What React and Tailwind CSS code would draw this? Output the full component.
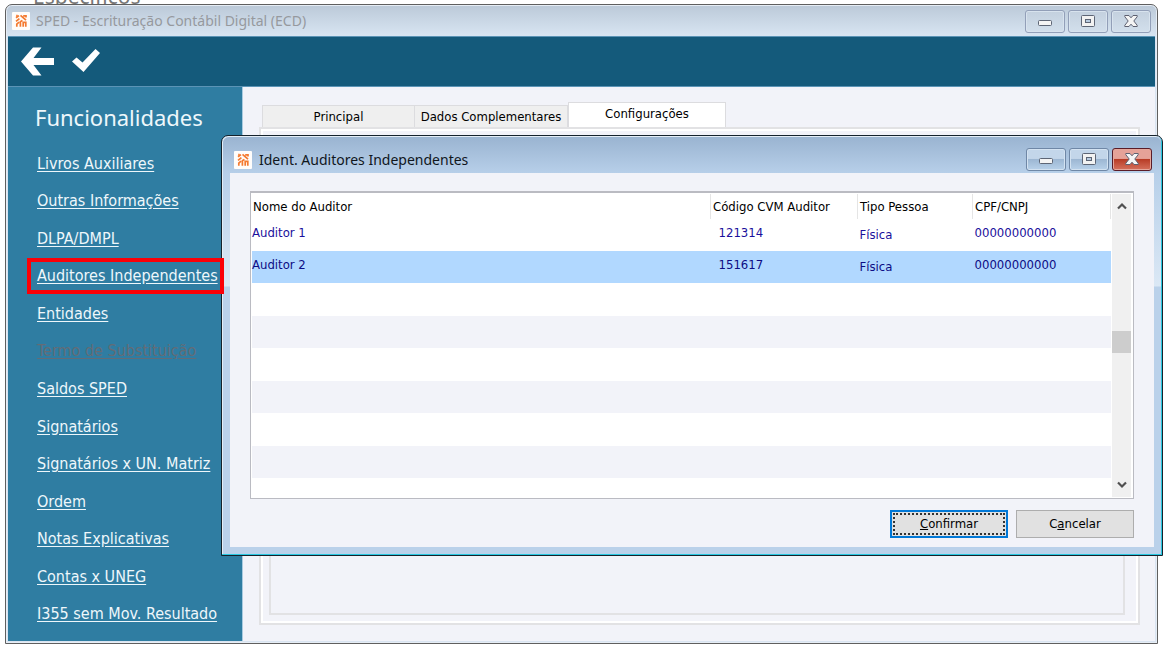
import React from "react";

const LINKS = [
  "Livros Auxiliares",
  "Outras Informações",
  "DLPA/DMPL",
  "Auditores Independentes",
  "Entidades",
  "Termo de Substituição",
  "Saldos SPED",
  "Signatários",
  "Signatários x UN. Matriz",
  "Ordem",
  "Notas Explicativas",
  "Contas x UNEG",
  "I355 sem Mov. Resultado",
];

const ROWS = [
  { nome: "Auditor 1", cvm: "121314", tipo: "Física", doc: "00000000000" },
  { nome: "Auditor 2", cvm: "151617", tipo: "Física", doc: "00000000000" },
];

const FILLERS = [
  "h-[33px] bg-white",
  "h-8 bg-[#f2f3f9]",
  "h-[33px] bg-white",
  "h-8 bg-[#f2f3f9]",
  "h-[33px] bg-white",
  "h-8 bg-[#f2f3f9]",
  "h-[19px] bg-white",
];

function AppLogo() {
  return (
    <svg className="h-[18px] w-[18px] shrink-0" viewBox="0 0 18 18" aria-hidden="true">
      <rect width="18" height="18" rx="1" fill="#fffdfb" />
      <g stroke="#f47a30" strokeWidth="1.7" fill="none">
        <path d="M4 5.800 7 3.600M8.500 3.400l5.500 4.800M4 9.400l3.400-2.800M11.200 3.800h2.800v1.800M4.200 3.600h1.400" />
        <path d="M4.800 14.800v-2.600l2.200-2M8.400 14.800V9.800l2-1.400M11.200 14.800v-4.400h2.600v4.400" />
      </g>
    </svg>
  );
}

function MinimizeIcon() {
  return (
    <svg className="h-4 w-4" viewBox="0 0 16 16" aria-hidden="true">
      <rect x="1.500" y="7.500" width="13" height="5" rx="1" fill="#f4f4f4" stroke="#5d6575" />
    </svg>
  );
}

function MaximizeIcon() {
  return (
    <svg className="h-4 w-4" viewBox="0 0 16 16" aria-hidden="true">
      <rect x="1.500" y="2.500" width="13" height="11" rx="1" fill="#f2f2f2" stroke="#5d6575" />
      <rect x="5.500" y="6.500" width="5" height="3" fill="#b7cbe0" stroke="#5d6575" />
    </svg>
  );
}

function CloseIcon() {
  return (
    <svg className="h-4 w-4" viewBox="0 0 16 16" aria-hidden="true">
      <path
        d="M1.800 2.500h4.200l2 2.300 2-2.300h4.200v1.200L10.800 8l3.400 4.300v1.200H10l-2-2.300-2 2.300H1.800v-1.200L5.200 8 1.800 3.700z"
        fill="#f4f4f4"
        stroke="#5d6070"
      />
    </svg>
  );
}

function WindowButtons({ active }) {
  const base = "flex h-[23px] w-10 items-center justify-center rounded-[3px] border ";
  const plain = active
    ? "border-[#6f87a6] bg-linear-to-b from-[#c3d6ea] from-45% via-[#9db7d3] via-50% to-[#b8d1ea] shadow-[inset_0_0_0_1px_#d3e2f1]"
    : "border-[#929fb8] bg-linear-to-b from-[#c3d0de] to-[#d2dfec] shadow-[inset_0_0_0_1px_#d8e3ee]";
  const close = active
    ? "border-[#5a1c28] bg-linear-to-b from-[#e5a298] from-45% via-[#b83c26] via-50% to-[#d5705c] shadow-[inset_0_0_0_1px_#e5a79c]"
    : plain;
  return (
    <div className="flex gap-[3px]">
      <button type="button" aria-label="Minimizar" className={base + plain}><MinimizeIcon /></button>
      <button type="button" aria-label="Maximizar" className={base + plain}><MaximizeIcon /></button>
      <button type="button" aria-label="Fechar" className={base + close}><CloseIcon /></button>
    </div>
  );
}

function Toolbar() {
  return (
    <div className="flex h-[51px] items-center gap-4 border-y border-[#5b94b6] bg-[#145a7b] pl-3">
      <button type="button" aria-label="Voltar">
        <svg className="h-[29px] w-[35px]" viewBox="0 0 35 29" aria-hidden="true">
          <path d="M13 .5h8.500L13.500 11H34v7H13.500l8 10.500H13L1 14.500z" fill="#fff" />
        </svg>
      </button>
      <button type="button" aria-label="Confirmar seleção" className="pb-1">
        <svg className="h-[26px] w-[30px]" viewBox="0 0 30 26" aria-hidden="true">
          <path d="M1 14.500 5.500 10.500l6 5L24.500 2l4.500 4-16.500 19z" fill="#fff" />
        </svg>
      </button>
    </div>
  );
}

function Sidebar() {
  return (
    <nav className="w-[235px] shrink-0 border-r border-[#a9cbe0] bg-[#2f7da2] pb-2 text-[#eef7fb]">
      <h1 className="pt-3 pl-[27px] font-['Noto_Sans',sans-serif] text-[22px] leading-9">Funcionalidades</h1>
      <ul className="grid h-[498px] auto-rows-fr pt-2.5">
        {LINKS.map((label) => (
          <li key={label} className="flex items-center pl-[23px]">
            <a
              href="#"
              className={
                "pr-0.5 pl-1.5 text-base leading-7 whitespace-nowrap underline underline-offset-2 " +
                (label === "Termo de Substituição" ? "text-[#636c76] " : "") +
                (label === "Auditores Independentes" ? "relative z-20 outline-4 outline-[#fb0007] " : "")
              }
            >
              {label}
            </a>
          </li>
        ))}
      </ul>
    </nav>
  );
}

function Tabs() {
  const idle = "mt-[3px] h-[22px] border border-b-0 border-[#dcdcdf] bg-[#efefef] ";
  return (
    <div role="tablist" className="flex pl-[3px] text-[13px] leading-5">
      <button type="button" role="tab" aria-selected="false" className={idle + "w-[153px]"}>Principal</button>
      <button type="button" role="tab" aria-selected="false" className={idle + "w-[153px] border-l-0"}>Dados Complementares</button>
      <button type="button" role="tab" aria-selected="true" className="-mb-[2px] h-[27px] w-[158px] border border-b-0 border-[#dcdcdf] bg-white pb-1">
        Configurações
      </button>
    </div>
  );
}

function AuditorTable() {
  const head = "border-r border-[#e5e5e5] text-left font-normal ";
  return (
    <div className="flex border border-[#babbc2] border-t-2 bg-white p-px">
      <div className="min-w-0 flex-1 pr-px">
        <table className="w-full table-fixed border-collapse text-[13px]">
          <colgroup>
            <col />
            <col className="w-[147px]" />
            <col className="w-[115px]" />
            <col className="w-[138px]" />
          </colgroup>
          <thead>
            <tr className="h-[25px] leading-4 text-black">
              <th className={head + "pl-px"}>Nome do Auditor</th>
              <th className={head + "pl-0.5"}>Código CVM Auditor</th>
              <th className={head + "pl-0.5"}>Tipo Pessoa</th>
              <th className={head + "pl-0.5"}>CPF/CNPJ</th>
            </tr>
          </thead>
          <tbody className="text-[#1a109c]">
            {ROWS.map((row, i) => (
              <tr key={row.cvm} className={"h-8 align-top leading-5 " + (i === 1 ? "bg-[#b1d8ff] text-[#0c0c84]" : "bg-white")}>
                <td className="pt-1">{row.nome}</td>
                <td className="pt-1 pl-2">{row.cvm}</td>
                <td className="pt-1.5 pl-0.5">{row.tipo}</td>
                <td className="pt-1 pl-0.5">{row.doc}</td>
              </tr>
            ))}
          </tbody>
        </table>
        {FILLERS.map((cls, i) => (
          <div key={i} className={cls} />
        ))}
      </div>
      <div className="mr-px flex w-[19px] flex-col items-center bg-[#f0f0f0]">
        <button type="button" aria-label="Rolar para cima" className="flex h-6 w-full items-center justify-center">
          <svg className="h-2 w-3" viewBox="0 0 12 8" aria-hidden="true">
            <path d="M2 6.500 6 2.500l4 4" fill="none" stroke="#505050" strokeWidth="2.200" />
          </svg>
        </button>
        <div className="mt-[113px] h-[22px] w-full bg-[#cdcdcd]" />
        <button type="button" aria-label="Rolar para baixo" className="mt-auto flex h-6 w-full items-center justify-center">
          <svg className="h-2 w-3" viewBox="0 0 12 8" aria-hidden="true">
            <path d="M2 1.500 6 5.500l4-4" fill="none" stroke="#505050" strokeWidth="2.200" />
          </svg>
        </button>
      </div>
    </div>
  );
}

function AuditorDialog() {
  return (
    <section
      role="dialog"
      aria-label="Ident. Auditores Independentes"
      className="absolute top-[135px] right-[3px] left-[221px] z-10 rounded-t-[7px] border border-[#15222c] bg-[linear-gradient(#b7cfe9_0,#b7cfe9_37px,#dbe8f5_150px,#bad1ea_151px)] shadow-[inset_-1px_-1px_0_#27c7e0,inset_1px_1px_0_#e4eef7]"
    >
      <header className="mx-px mt-px flex h-9 items-center justify-between rounded-t-md bg-linear-to-b from-[#9ab4d1] to-[#b7cfe9] pr-[9px] pl-[11px]">
        <div className="flex items-center gap-[7px] pt-2.5">
          <AppLogo />
          <h2 className="font-['Noto_Sans',sans-serif] text-sm leading-5 text-[#10161c]">Ident. Auditores Independentes</h2>
        </div>
        <div className="pt-2"><WindowButtons active /></div>
      </header>
      <div className="mx-2 mb-2 bg-[#f2f3f9] px-[20px] pt-[18px] pb-[9px]">
        <AuditorTable />
        <div className="flex justify-end gap-2 pt-[11px] text-[13px]">
          <button type="button" className="h-7 w-[118px] border-2 border-[#0078d7] bg-[#e1e1e1] p-px">
            <span className="flex h-full items-center justify-center border-2 border-dotted border-[#333]">
              <span><u>C</u>onfirmar</span>
            </span>
          </button>
          <button type="button" className="h-7 w-[118px] border border-[#adadad] bg-[#e1e1e1]">
            C<u>a</u>ncelar
          </button>
        </div>
      </div>
    </section>
  );
}

export default function App() {
  return (
    <main className="relative overflow-hidden bg-white pb-1 font-['DejaVu_Sans_Condensed','Noto_Sans',sans-serif] text-black">
      <div className="flex h-1 items-end pl-[33px]">
        <p className="font-['Noto_Sans',sans-serif] text-[21px] leading-4 text-[#777]">Específicos</p>
      </div>
      <section className="relative mr-2 ml-[5px] rounded-t-[7px] border border-[#5f5f5f] bg-[#d9e4f1] shadow-[inset_0_0_0_1px_#e6edf5]">
        <header className="mx-px mt-px flex h-[30px] items-center justify-between rounded-t-[5px] bg-linear-to-b from-[#bccad9] to-[#d8e5f2] pr-[5px] pl-[5px]">
          <div className="flex items-center gap-1.5">
            <AppLogo />
            <h2 className="font-['Noto_Sans',sans-serif] text-sm leading-5 text-[#96999e]">SPED - Escrituração Contábil Digital (ECD)</h2>
          </div>
          <WindowButtons active={false} />
        </header>
        <div className="mx-[2px] mb-[2px] bg-[#f2f3f9]">
          <Toolbar />
          <div className="flex">
            <Sidebar />
            <div className="flex min-w-0 flex-1 flex-col pt-[15px] pr-[15px] pb-4 pl-4">
              <Tabs />
              <div className="flex-1 border-2 border-[#e2e2e4] py-2 pr-[13px] pl-2 shadow-[inset_0_0_0_2px_#fff]">
                <div className="h-full border-2 border-[#e2e2e4]" />
              </div>
            </div>
          </div>
        </div>
      </section>
      <AuditorDialog />
    </main>
  );
}
